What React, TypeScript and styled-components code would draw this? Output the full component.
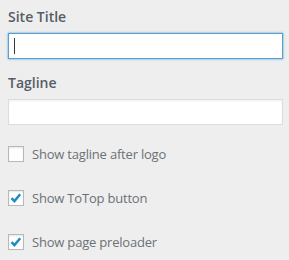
import React from "react";
import styled, { createGlobalStyle } from "styled-components";

const GlobalStyle = createGlobalStyle`
  html, body {
    margin: 0;
    padding: 0;
    background: #eeeeee;
  }
  body {
    font-family: "Open Sans", "Noto Sans", "Liberation Sans", sans-serif;
  }
`;

function CheckMark() {
  return (
    <Tick viewBox="0 0 16 16">
      <path d="M2.8 8.2 L6.2 11.6 L12.8 3.8" fill="none" stroke="#1e8cbe" strokeWidth="2.8" />
    </Tick>
  );
}

interface OptionProps {
  label: string;
  checked?: boolean;
}

function Option({ label, checked }: OptionProps) {
  return (
    <OptionRow>
      <Box>{checked && <CheckMark />}</Box>
      <OptionLabel>{label}</OptionLabel>
    </OptionRow>
  );
}

export default function App() {
  return (
    <>
      <GlobalStyle />
      <Panel>
        <Field>
          <FieldLabel>Site Title</FieldLabel>
          <TextInput focused>
            <Caret />
          </TextInput>
        </Field>
        <Field>
          <FieldLabel>Tagline</FieldLabel>
          <TextInput />
        </Field>
        <Options>
          <Option label="Show tagline after logo" />
          <Option label="Show ToTop button" checked />
          <Option label="Show page preloader" checked />
        </Options>
      </Panel>
    </>
  );
}

const Panel = styled.div`
  width: 275px;
  padding: 7px 6px 0 8px;
  display: flex;
  flex-direction: column;
`;

const Field = styled.div`
  display: flex;
  flex-direction: column;
  gap: 6px;
  margin-bottom: 14px;
`;

const FieldLabel = styled.div`
  font-size: 14px;
  line-height: 20px;
  font-weight: 600;
  color: #555d66;
`;

const TextInput = styled.div<{ focused?: boolean }>`
  box-sizing: border-box;
  height: 26px;
  width: 275px;
  background: #fff;
  border: 1px solid ${p => (p.focused ? "#5b9dd9" : "#dddddd")};
  box-shadow: ${p =>
    p.focused
      ? "0 0 2px rgba(30, 140, 190, 0.8)"
      : "inset 0 1px 2px rgba(0, 0, 0, 0.07)"};
  display: flex;
  align-items: center;
  padding-left: 5px;
`;

const Caret = styled.span`
  width: 1px;
  height: 16px;
  background: #32373c;
`;

const Options = styled.div`
  display: flex;
  flex-direction: column;
  gap: 28px;
  margin-top: 7px;
`;

const OptionRow = styled.div`
  display: flex;
  align-items: center;
  gap: 8px;
  height: 16px;
`;

const Box = styled.span`
  box-sizing: border-box;
  width: 16px;
  height: 16px;
  background: #fff;
  border: 1px solid #b4b9be;
  box-shadow: inset 0 1px 2px rgba(0, 0, 0, 0.1);
  display: flex;
  align-items: center;
  justify-content: center;
`;

const Tick = styled.svg`
  width: 14px;
  height: 14px;
`;

const OptionLabel = styled.span`
  font-size: 13px;
  line-height: 16px;
  letter-spacing: -0.2px;
  color: #6c7176;
`;
